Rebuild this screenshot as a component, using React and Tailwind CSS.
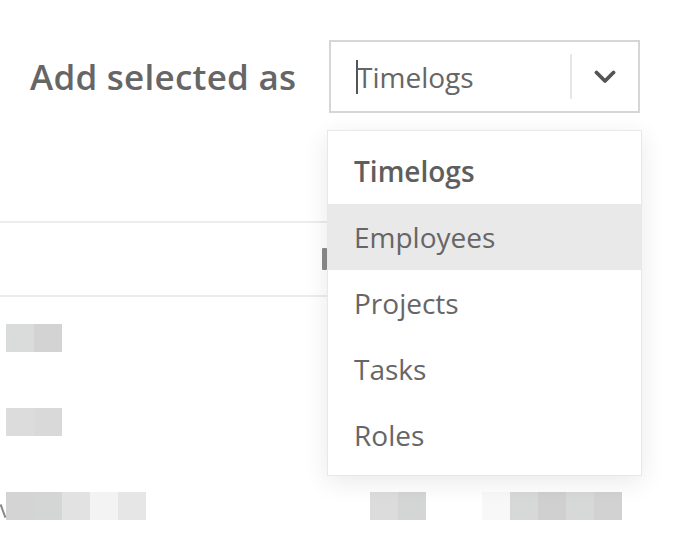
import React from "react";

function Pix({ left, color }) {
  return <div className="h-[28px] w-[28px] shrink-0" style={{ background: color, marginLeft: left }} />;
}

export default function App() {
  const items = ["Employees", "Projects", "Tasks", "Roles"];

  return (
    <div className="relative w-[684px] h-[544px] overflow-hidden bg-white font-['Open_Sans',sans-serif]">
      {/* header row */}
      <div className="flex items-center pt-[40px] pl-[30px]">
        <div className="w-[299px] text-[35px] font-semibold text-[#666] leading-none tracking-[0.25px]">Add selected as</div>
        <div className="flex items-center w-[311px] h-[73px] border-2 border-[#d6d6d6] bg-white">
          <div className="flex-1 flex items-center pl-[25px]">
            <span className="w-[2px] h-[34px] bg-[#555]" />
            <span className="text-[28px] text-[#666] leading-none -ml-[1px]">Timelogs</span>
          </div>
          <div className="w-[2px] h-[45px] bg-[#e6e6e6]" />
          <div className="w-[66px] flex items-center justify-center">
            <svg width="22" height="14" viewBox="0 0 22 14">
              <polyline points="2.5,2.5 11,11 19.5,2.5" fill="none" stroke="#555" strokeWidth="3.8" strokeLinecap="round" strokeLinejoin="round" />
            </svg>
          </div>
        </div>
      </div>

      {/* table behind */}
      <div className="mt-[108px] w-[327px] h-[76px] border-y-2 border-[#ececec] flex items-center justify-end">
        <div className="w-[5px] h-[22px] bg-[#8a8a8a] rounded-[1px]" />
      </div>

      <div className="flex flex-col gap-[56px] pt-[27px]">
        <div className="flex">
          <Pix left={6} color="#dadbdb" />
          <Pix left={0} color="#d3d3d3" />
        </div>
        <div className="flex">
          <Pix left={6} color="#dcdcdc" />
          <Pix left={0} color="#d9d9d9" />
        </div>
        <div className="flex items-center">
          <span className="w-[2px] h-[14px] bg-[#888] rotate-[-20deg] ml-[2px] mt-[10px]" />
          <Pix left={2} color="#d4d4d4" />
          <Pix left={0} color="#d4d5d5" />
          <Pix left={0} color="#e2e2e2" />
          <Pix left={0} color="#f3f3f3" />
          <Pix left={0} color="#e6e6e6" />
          <Pix left={224} color="#dcdcdc" />
          <Pix left={0} color="#d4d5d5" />
          <Pix left={56} color="#f8f8f8" />
          <Pix left={0} color="#d7d8d8" />
          <Pix left={0} color="#d0d0d0" />
          <Pix left={0} color="#d7d8d8" />
          <Pix left={0} color="#d2d2d2" />
        </div>
      </div>

      {/* open dropdown */}
      <div className="absolute left-[327px] top-[130px] w-[315px] border border-[#e8e8e8] bg-white py-[7px] shadow-[0_6px_24px_rgba(0,0,0,0.09)]">
        <div className="h-[66px] flex items-center pl-[26px] text-[28px] font-semibold text-[#5e5e5e]">Timelogs</div>
        {items.map((it, i) => (
          <div
            key={it}
            className={`h-[66px] flex items-center pl-[26px] text-[28px] text-[#666] ${i === 0 ? "bg-[#e9e9e9]" : ""}`}
          >
            {it}
          </div>
        ))}
      </div>
    </div>
  );
}
